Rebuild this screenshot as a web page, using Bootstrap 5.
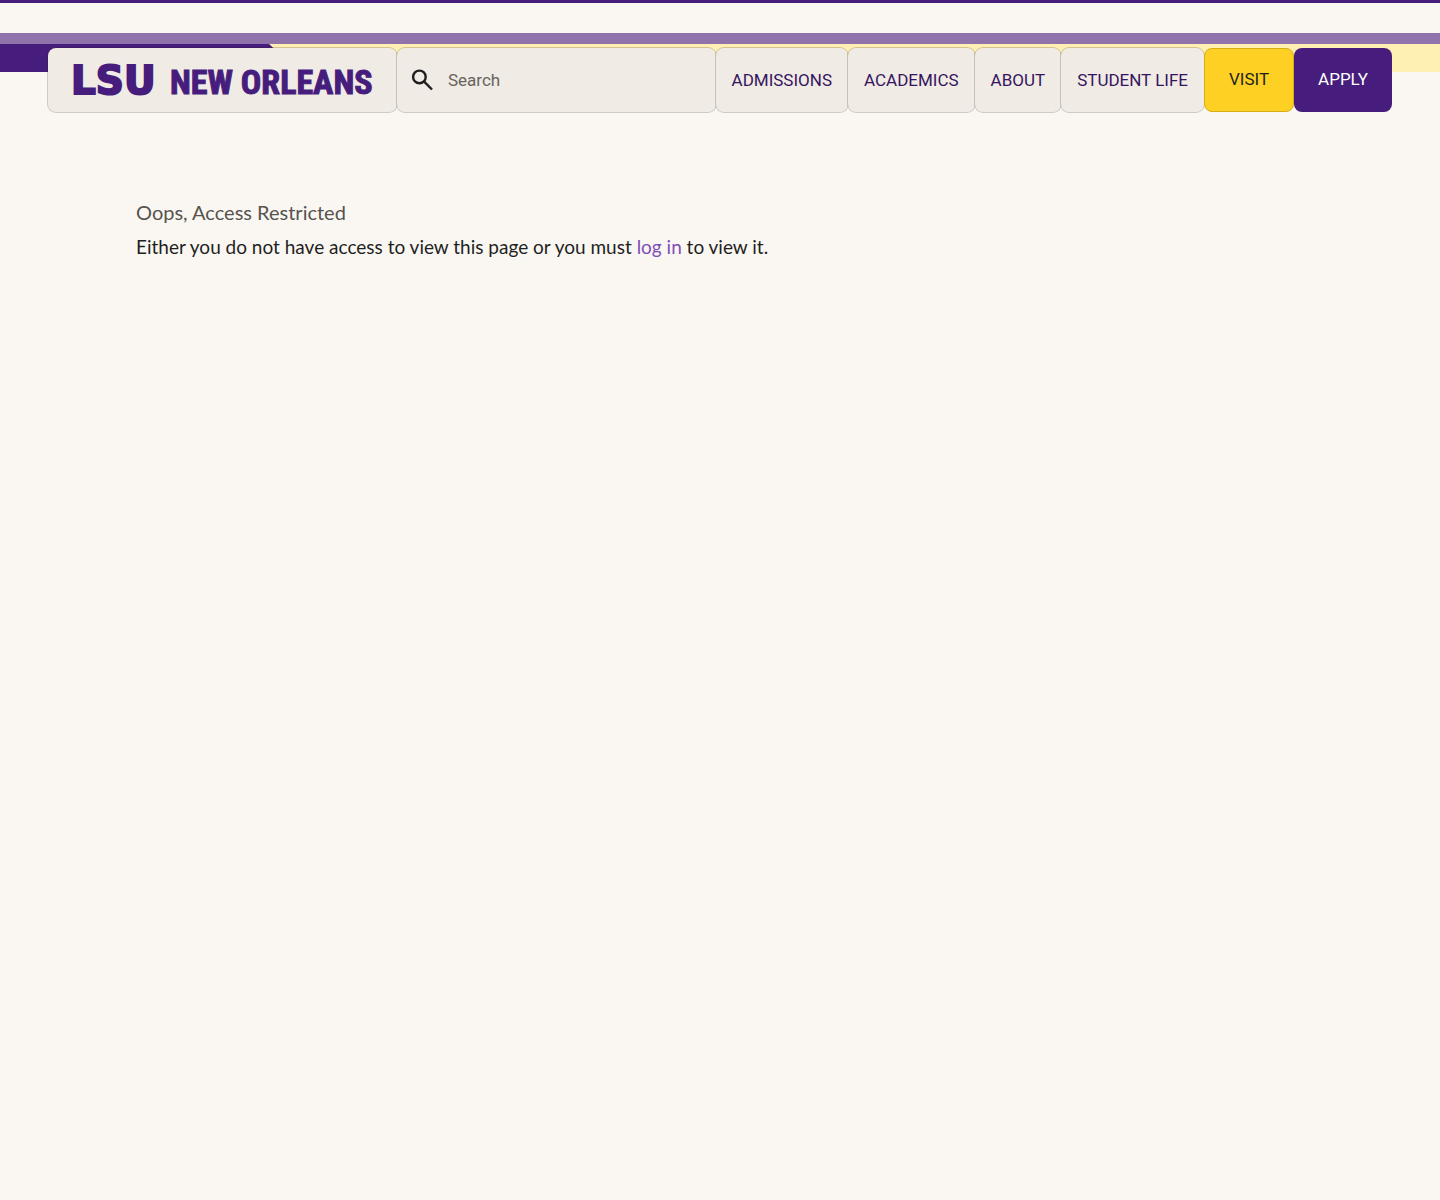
<!DOCTYPE html>
<html lang="en">
<head>
<meta charset="utf-8">
<meta name="viewport" content="width=device-width, initial-scale=1">
<title>Access Restricted | LSU New Orleans</title>
<link rel="stylesheet" href="https://cdn.jsdelivr.net/npm/bootstrap@5.3.0/dist/css/bootstrap.min.css">
<style>
:root { --purple: #461d7c; --cream: #faf7f2; --tile: #f0ebe4; }
body { background: var(--cream); color: #1f1f1f; font-family: Lato, Roboto, sans-serif; font-size: 19px; line-height: 28px; }
.top-rule { height: 33px; border-top: 3px solid var(--purple); }
.mauve-bar { height: 11px; background: #8f73aa; }
.band { height: 28px; background: #feefb2; }
.band-wedge { width: 300px; height: 28px; background: var(--purple); clip-path: polygon(0 0, 269px 0, 100% 100%, 0 100%); }
.site-nav { margin-top: -24px; padding: 0 48px; font-family: Roboto, Lato, sans-serif; font-size: 17px; }
.tile { height: 64px; border-radius: 8px; background: var(--tile); box-shadow: 0 0 0 1px rgba(30, 30, 20, .2); color: #35155f; }
.tile-link { padding: 0 16px; white-space: nowrap; }
.brand-tile { width: 349px; }
.brand-tile svg { width: 300px; height: 56px; overflow: visible; }
.search-tile { padding: 0 14px; min-width: 160px; }
.search-tile input { height: 48px; padding: 0; border: 0; outline: 0; background: transparent; color: #1f1f1f; min-width: 0; margin-left: 13px; }
.search-tile input::placeholder { color: #66635e; opacity: 1; }
.cta { height: 64px; border-radius: 8px; padding: 0 24px 2px; white-space: nowrap; }
.cta-visit { background: #fdd023; color: #1f1f1f; border: 1px solid #d6ad13; }
.cta-apply { background: var(--purple); color: #fff; }
.notice { padding: 86px 136px; }
.notice h1 { font-size: 20px; line-height: 28px; font-weight: 400; color: #56534e; margin-bottom: 7px; }
.notice a { color: #7f4fb8; }
</style>
</head>
<body>
<header>
  <div class="top-rule"></div>
  <div class="mauve-bar"></div>
  <div class="band"><div class="band-wedge"></div></div>
  <nav class="site-nav d-flex position-relative" aria-label="Main">
    <a class="tile brand-tile d-flex align-items-center justify-content-center flex-shrink-0" href="#" aria-label="LSU New Orleans">
      <svg viewBox="0 0 300 56" aria-hidden="true" fill="#461d7c" stroke="#461d7c" font-weight="700">
        <text x="-2" y="42" stroke-width="2" font-family="DejaVu Sans, sans-serif" font-size="39">LSU</text>
        <text x="97" y="42" stroke-width="1" font-family="Liberation Sans Narrow, Roboto Condensed, Open Sans Condensed, Liberation Sans, sans-serif" font-size="34">NEW ORLEANS</text>
      </svg>
    </a>
    <form class="tile search-tile d-flex align-items-center flex-grow-1" role="search">
      <label for="q" class="d-flex">
        <svg width="24" height="24" viewBox="0 0 24 24" fill="none" stroke="#1f1f1f" stroke-width="2.4" role="img" aria-label="Search"><circle cx="8.4" cy="8.9" r="6.3"/><path d="M12.9 13.4 21 21.5"/></svg>
      </label>
      <input id="q" class="flex-grow-1" type="search" placeholder="Search">
    </form>
    <a class="tile tile-link d-flex align-items-center text-decoration-none" href="#">ADMISSIONS</a>
    <a class="tile tile-link d-flex align-items-center text-decoration-none" href="#">ACADEMICS</a>
    <a class="tile tile-link d-flex align-items-center text-decoration-none" href="#">ABOUT</a>
    <a class="tile tile-link d-flex align-items-center text-decoration-none" href="#">STUDENT LIFE</a>
    <a class="cta cta-visit d-flex align-items-center text-decoration-none" href="#">VISIT</a>
    <a class="cta cta-apply d-flex align-items-center text-decoration-none" href="#">APPLY</a>
  </nav>
</header>
<main class="notice">
  <h1>Oops, Access Restricted</h1>
  <p class="mb-0">Either you do not have access to view this page or you must <a class="text-decoration-none" href="#">log in</a> to view it.</p>
</main>
<script src="https://cdn.jsdelivr.net/npm/bootstrap@5.3.0/dist/js/bootstrap.bundle.min.js"></script>
</body>
</html>
